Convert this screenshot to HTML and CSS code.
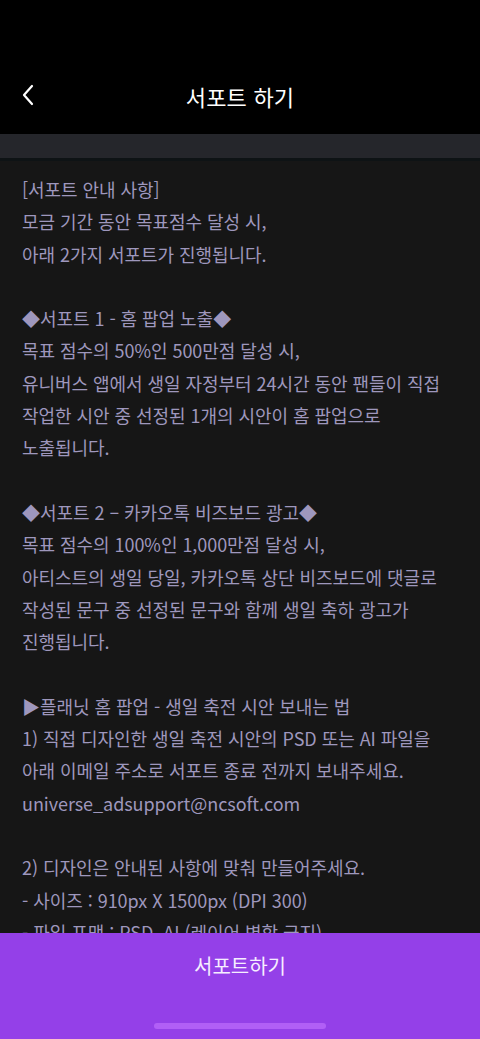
FILE: index.html
```html
<!DOCTYPE html>
<html lang="ko">
<head>
<meta charset="utf-8">
<title>서포트 하기</title>
<link rel="stylesheet" href="styles.css">
</head>
<body>
<div class="app">
  <header class="topbar">
    <button class="back" aria-label="뒤로">
      <svg width="14" height="22" viewBox="0 0 14 22"><path d="M11 2 L3 11 L11 20" fill="none" stroke="#fff" stroke-width="2.2" stroke-linecap="round" stroke-linejoin="round"/></svg>
    </button>
    <h1 class="title">서포트 하기</h1>
  </header>
  <div class="band"></div>
  <div class="rule"></div>
  <main class="content"><p class="notice">[서포트 안내 사항]
모금 기간 동안 목표점수 달성 시,
아래 2가지 서포트가 진행됩니다.

◆서포트 1 - 홈 팝업 노출◆
목표 점수의 50%인 500만점 달성 시,
유니버스 앱에서 생일 자정부터 24시간 동안 팬들이 직접
작업한 시안 중 선정된 1개의 시안이 홈 팝업으로
노출됩니다.

◆서포트 2 – 카카오톡 비즈보드 광고◆
목표 점수의 100%인 1,000만점 달성 시,
아티스트의 생일 당일, 카카오톡 상단 비즈보드에 댓글로
작성된 문구 중 선정된 문구와 함께 생일 축하 광고가
진행됩니다.

▶플래닛 홈 팝업 - 생일 축전 시안 보내는 법
1) 직접 디자인한 생일 축전 시안의 PSD 또는 AI 파일을
아래 이메일 주소로 서포트 종료 전까지 보내주세요.
universe_adsupport@ncsoft.com

2) 디자인은 안내된 사항에 맞춰 만들어주세요.
- 사이즈 : 910px X 1500px (DPI 300)
- 파일 포맷 : PSD, AI (레이어 병합 금지)</p></main>
  <footer class="cta">
    <button class="cta-btn">서포트하기</button>
    <div class="home-indicator"></div>
  </footer>
</div>
</body>
</html>
```

FILE: styles.css
```css
* { box-sizing: border-box; margin: 0; padding: 0; }
html, body { background: #161616; }
body {
  width: 480px;
  height: 1039px;
  overflow: hidden;
  font-family: "Noto Sans CJK KR", "Noto Sans", sans-serif;
}
.app { display: flex; flex-direction: column; height: 1039px; }
.topbar {
  height: 134px;
  background: #000;
  display: flex;
  align-items: flex-end;
  justify-content: center;
  padding-bottom: 22px;
  position: relative;
  flex-shrink: 0;
}
.back {
  position: absolute;
  left: 17px;
  top: 84px;
  width: 22px;
  height: 22px;
  background: none;
  border: 0;
  display: flex;
  align-items: center;
  justify-content: center;
}
.title {
  color: #fff;
  font-size: 22px;
  font-weight: 400;
  line-height: 32px;
  letter-spacing: 0.2px;
}
.band { height: 24px; background: #25262b; flex-shrink: 0; }
.rule { height: 3px; background: #0e1315; flex-shrink: 0; }
.content {
  flex: 1;
  overflow: hidden;
  padding: 12px 22px 0 22px;
}
.notice {
  white-space: pre-line;
  color: #9e97bd;
  font-size: 18px;
  line-height: 32.3px;
  letter-spacing: -0.05px;
}
.cta {
  position: fixed;
  left: 0;
  bottom: 0;
  width: 480px;
  height: 106px;
  background: #9440e8;
  display: flex;
  flex-direction: column;
  align-items: center;
}
.cta-btn {
  margin-top: 18px;
  background: none;
  border: 0;
  color: #f6eeff;
  font-family: "Noto Sans CJK KR", "Noto Sans", sans-serif;
  font-size: 20px;
  line-height: 30px;
}
.home-indicator {
  margin-top: auto;
  margin-bottom: 10px;
  width: 172px;
  height: 6px;
  border-radius: 3px;
  background: #b15ff6;
}
```
